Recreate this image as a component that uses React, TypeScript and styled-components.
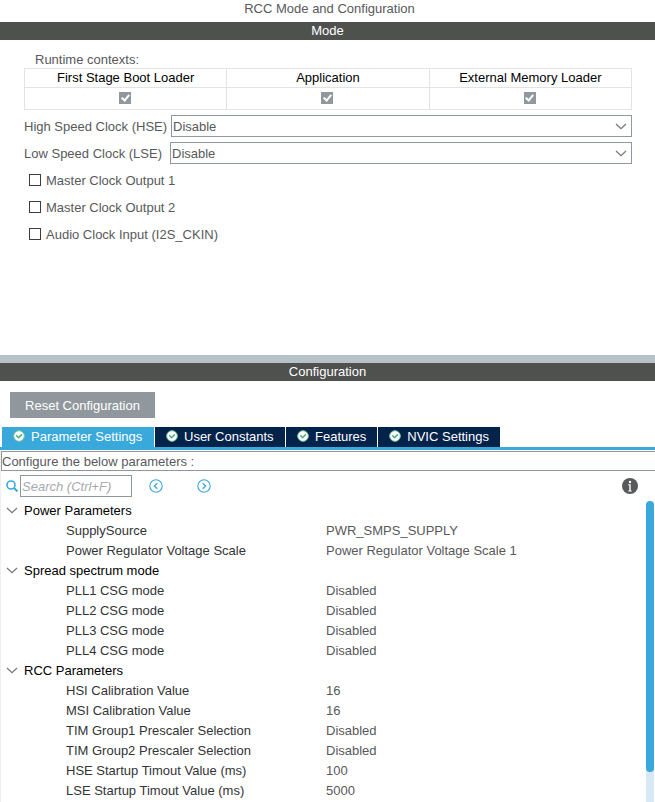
import React, { useState } from "react";
import styled, { createGlobalStyle } from "styled-components";

const color = {
  text: "#58595b",
  strong: "#000000",
  label: "#333436",
  bar: "#4f514f",
  border: "#90989e",
  grid: "#e1e4e7",
  blue: "#39a9dc",
  navy: "#03234b",
};

const GlobalStyle = createGlobalStyle`
  *, *::before, *::after { box-sizing: border-box; }
  body { margin: 0; background: #ffffff; }
  body, button, input, select, table {
    font-family: "Liberation Sans", Arial, sans-serif;
    font-size: 13px;
    line-height: 16px;
    color: ${color.text};
  }
`;

const Page = styled.div`
  display: flex;
  flex-direction: column;
  min-height: 100vh;
`;

const Title = styled.h1`
  margin: 0;
  padding: 1px 0 5px 4px;
  font-size: 13px;
  font-weight: 400;
  line-height: 16px;
  text-align: center;
`;

const SectionBar = styled.h2`
  margin: 0;
  background: ${color.bar};
  color: #ffffff;
  font-size: 13px;
  font-weight: 400;
  line-height: 18px;
  text-align: center;
`;

const ModePanel = styled.section`
  display: flex;
  flex-direction: column;
  min-height: 315px;
  padding: 12px 23px 24px 24px;
`;

const ContextTable = styled.table`
  width: 100%;
  table-layout: fixed;
  border-collapse: collapse;
  color: ${color.strong};

  caption {
    padding-left: 11px;
    color: ${color.text};
    text-align: left;
  }
  th, td {
    height: 19px;
    padding: 0;
    border: 1px solid ${color.grid};
    font-weight: 400;
    line-height: 18px;
    text-align: center;
  }
  td {
    height: 22px;
    padding-bottom: 2px;
  }
`;

const Check = styled.input<{ $filled?: boolean }>`
  appearance: none;
  display: grid;
  place-items: center;
  width: 12px;
  height: 12px;
  margin: 0;
  border: ${(p) => (p.$filled ? "0" : "1px solid #3c3d3f")};
  background: ${(p) => (p.$filled ? "#90989e" : "#ffffff")};

  &:checked::after {
    content: "";
    width: 5px;
    height: 8px;
    margin-bottom: 2px;
    border: solid ${(p) => (p.$filled ? "#ffffff" : "#3c3d3f")};
    border-width: 0 2px 2px 0;
    transform: rotate(40deg);
  }
`;

const CenteredCell = styled.label`
  display: flex;
  justify-content: center;
  padding-right: 1px;
`;

const Fields = styled.div`
  display: flex;
  flex-direction: column;
  gap: 5px;
  margin-top: 5px;
`;

const Field = styled.div<{ $labelWidth: number }>`
  display: grid;
  grid-template-columns: ${(p) => p.$labelWidth}px minmax(0, 1fr);
  align-items: center;

  label {
    padding-top: 2px;
    white-space: nowrap;
  }
`;

const SelectBox = styled.div`
  position: relative;

  select {
    appearance: none;
    display: block;
    width: 100%;
    height: 22px;
    padding: 2px 20px 0 1px;
    border: 1px solid ${color.border};
    border-radius: 0;
    background: #ffffff;
  }
  svg {
    position: absolute;
    right: 5px;
    top: 8px;
    pointer-events: none;
  }
`;

const Options = styled.div`
  display: flex;
  flex-direction: column;
  gap: 9px;
  padding: 7px 5px;
`;

const Option = styled.label`
  display: flex;
  align-items: center;
  gap: 5px;

  span { padding-top: 2px; }
`;

const Splitter = styled.div`
  height: 8px;
  background: #b8c3c9;
`;

const Toolbar = styled.div`
  display: flex;
  padding: 11px 10px 9px;
`;

const ResetButton = styled.button`
  width: 145px;
  height: 26px;
  padding: 2px 0 0;
  border: 0;
  background: ${color.border};
  color: #ffffff;
`;

const Tabs = styled.div`
  display: flex;
  gap: 1px;
  padding-left: 2px;
  border-bottom: 3px solid ${color.blue};
`;

const Tab = styled.button<{ $width: number }>`
  display: flex;
  align-items: center;
  gap: 6px;
  min-width: ${(p) => p.$width}px;
  height: 20px;
  padding: 0 11px;
  border: 0;
  background: ${color.navy};
  color: #ffffff;
  white-space: nowrap;

  &[aria-selected="true"] { background: ${color.blue}; }
  svg { margin-bottom: 2px; }
`;

const ParameterPanel = styled.section`
  display: flex;
  flex: 1;
  flex-direction: column;
  padding-top: 1px;
  border-left: 1px solid #f0f0f0;
`;

const Hint = styled.p`
  margin: 0;
  height: 20px;
  border: 1px solid ${color.border};
  border-right: 0;
  line-height: 19px;
`;

const SearchRow = styled.div`
  display: flex;
  align-items: center;
  height: 30px;
  padding: 0 17px 0 5px;
`;

const SearchLabel = styled.label`
  display: flex;
  align-items: center;
  gap: 2px;
  margin-right: 17px;

  input {
    width: 112px;
    height: 22px;
    padding: 0 1px;
    border: 1px solid ${color.border};
    border-radius: 0;
    background: #ffffff;
    font-style: italic;
  }
  input::placeholder { color: #a7a9ac; opacity: 1; }
`;

const IconButton = styled.button`
  display: flex;
  padding: 0;
  border: 0;
  background: none;

  & + & { margin-left: 34px; }
  &:last-child { margin-left: auto; }
`;

const TreeArea = styled.div`
  display: grid;
  flex: 1;
  grid-template-columns: minmax(0, 1fr) 8px;
  align-items: start;
  padding-right: 1px;
`;

const Tree = styled.table`
  width: 100%;
  border-collapse: collapse;
  table-layout: fixed;

  th, td {
    height: 20px;
    padding: 0;
    font-weight: 400;
    line-height: 20px;
    text-align: left;
  }
`;

const NameColumn = styled.col`
  width: 325px;
`;

const GroupButton = styled.button`
  display: flex;
  align-items: center;
  gap: 6px;
  height: 20px;
  padding: 0 0 0 5px;
  border: 0;
  background: none;
  color: ${color.strong};

  svg { margin-bottom: 1px; }
`;

const NameCell = styled.th`
  && { padding-left: 65px; }
  color: ${color.label};
`;

const ScrollTrack = styled.div`
  align-self: stretch;
  background: linear-gradient(to bottom, #ffffff 8px, #d9e8f5 8px);
`;

const ScrollThumb = styled.div`
  height: 271px;
  border-radius: 4px;
  background: ${color.blue};
`;

const Chevron = () => (
  <svg width="12" height="7" viewBox="0 0 12 7" fill="none" stroke="#737578" strokeWidth="1.2" aria-hidden="true">
    <path d="M1 1l5 4.6L11 1" />
  </svg>
);

const StatusIcon = () => (
  <svg width="12" height="12" viewBox="0 0 12 12" fill="none" aria-hidden="true">
    <circle cx="6" cy="6" r="5.3" fill="#fff" stroke="#7cc79b" />
    <path d="M3.2 5.3L5.6 7.7 8.9 4.4" stroke="#4cae78" strokeWidth="1.5" />
  </svg>
);

const SearchIcon = () => (
  <svg width="12" height="12" viewBox="0 0 12 12" fill="none" stroke={color.blue} strokeWidth="1.6" aria-hidden="true">
    <circle cx="5" cy="5" r="4" />
    <path d="M8 8l3.4 3.4" strokeWidth="2" />
  </svg>
);

const ArrowIcon = ({ next }: { next?: boolean }) => (
  <svg width="14" height="14" viewBox="0 0 14 14" fill="none" stroke={color.blue} aria-hidden="true">
    <circle cx="7" cy="7" r="6.2" strokeWidth="1.1" />
    <path d={next ? "M5.7 4.2L8.6 7 5.7 9.8" : "M8.3 4.2L5.4 7l2.9 2.8"} strokeWidth="1.3" />
  </svg>
);

const InfoIcon = () => (
  <svg width="16" height="16" viewBox="0 0 16 16" aria-hidden="true">
    <circle cx="8" cy="8" r="8" fill="#58595b" />
    <circle cx="8" cy="4" r="1.2" fill="#fff" />
    <path d="M6.2 6.3h2.5v6.1h1v1H6.3v-1h1V7.3H6.2z" fill="#fff" />
  </svg>
);

const contexts = ["First Stage Boot Loader", "Application", "External Memory Loader"];

const clocks = [
  { id: "hse", label: "High Speed Clock (HSE)", width: 147 },
  { id: "lse", label: "Low Speed Clock (LSE)", width: 146 },
];

const options = ["Master Clock Output 1", "Master Clock Output 2", "Audio Clock Input (I2S_CKIN)"];

const tabs = [
  { name: "Parameter Settings", width: 152 },
  { name: "User Constants", width: 130 },
  { name: "Features", width: 91 },
  { name: "NVIC Settings", width: 122 },
];

const groups: { name: string; rows: [string, string][] }[] = [
  {
    name: "Power Parameters",
    rows: [
      ["SupplySource", "PWR_SMPS_SUPPLY"],
      ["Power Regulator Voltage Scale", "Power Regulator Voltage Scale 1"],
    ],
  },
  {
    name: "Spread spectrum mode",
    rows: [
      ["PLL1 CSG mode", "Disabled"],
      ["PLL2 CSG mode", "Disabled"],
      ["PLL3 CSG mode", "Disabled"],
      ["PLL4 CSG mode", "Disabled"],
    ],
  },
  {
    name: "RCC Parameters",
    rows: [
      ["HSI Calibration Value", "16"],
      ["MSI Calibration Value", "16"],
      ["TIM Group1 Prescaler Selection", "Disabled"],
      ["TIM Group2 Prescaler Selection", "Disabled"],
      ["HSE Startup Timout Value (ms)", "100"],
      ["LSE Startup Timout Value (ms)", "5000"],
    ],
  },
];

export default function App() {
  const [activeTab, setActiveTab] = useState(tabs[0].name);
  const [closed, setClosed] = useState<string[]>([]);

  const toggle = (name: string) =>
    setClosed((list) => (list.includes(name) ? list.filter((n) => n !== name) : [...list, name]));

  return (
    <Page>
      <GlobalStyle />
      <Title>RCC Mode and Configuration</Title>
      <SectionBar>Mode</SectionBar>
      <ModePanel>
        <ContextTable>
          <caption>Runtime contexts:</caption>
          <thead>
            <tr>
              {contexts.map((name) => (
                <th key={name} scope="col">{name}</th>
              ))}
            </tr>
          </thead>
          <tbody>
            <tr>
              {contexts.map((name) => (
                <td key={name}>
                  <CenteredCell>
                    <Check type="checkbox" $filled defaultChecked aria-label={name} />
                  </CenteredCell>
                </td>
              ))}
            </tr>
          </tbody>
        </ContextTable>
        <Fields>
          {clocks.map((clock) => (
            <Field key={clock.id} $labelWidth={clock.width}>
              <label htmlFor={clock.id}>{clock.label}</label>
              <SelectBox>
                <select id={clock.id} defaultValue="Disable">
                  <option>Disable</option>
                </select>
                <Chevron />
              </SelectBox>
            </Field>
          ))}
        </Fields>
        <Options>
          {options.map((name) => (
            <Option key={name}>
              <Check type="checkbox" />
              <span>{name}</span>
            </Option>
          ))}
        </Options>
      </ModePanel>
      <Splitter />
      <SectionBar>Configuration</SectionBar>
      <Toolbar>
        <ResetButton type="button">Reset Configuration</ResetButton>
      </Toolbar>
      <Tabs role="tablist">
        {tabs.map((tab) => (
          <Tab
            key={tab.name}
            type="button"
            role="tab"
            $width={tab.width}
            aria-selected={tab.name === activeTab}
            onClick={() => setActiveTab(tab.name)}
          >
            <StatusIcon />
            {tab.name}
          </Tab>
        ))}
      </Tabs>
      <ParameterPanel>
        <Hint>Configure the below parameters :</Hint>
        <SearchRow>
          <SearchLabel>
            <SearchIcon />
            <input type="text" placeholder="Search (Ctrl+F)" aria-label="Search" />
          </SearchLabel>
          <IconButton type="button" aria-label="Previous"><ArrowIcon /></IconButton>
          <IconButton type="button" aria-label="Next"><ArrowIcon next /></IconButton>
          <IconButton type="button" aria-label="Information"><InfoIcon /></IconButton>
        </SearchRow>
        <TreeArea>
          <Tree>
            <colgroup>
              <NameColumn />
              <col />
            </colgroup>
            {groups.map((group) => (
              <tbody key={group.name}>
                <tr>
                  <th colSpan={2} scope="rowgroup">
                    <GroupButton
                      type="button"
                      aria-expanded={!closed.includes(group.name)}
                      onClick={() => toggle(group.name)}
                    >
                      <Chevron />
                      {group.name}
                    </GroupButton>
                  </th>
                </tr>
                {!closed.includes(group.name) &&
                  group.rows.map(([name, value]) => (
                    <tr key={name}>
                      <NameCell scope="row">{name}</NameCell>
                      <td>{value}</td>
                    </tr>
                  ))}
              </tbody>
            ))}
          </Tree>
          <ScrollTrack>
            <ScrollThumb />
          </ScrollTrack>
        </TreeArea>
      </ParameterPanel>
    </Page>
  );
}
